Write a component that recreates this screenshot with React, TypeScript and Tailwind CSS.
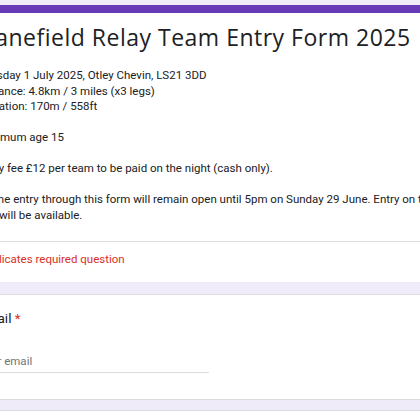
export default function App() {
  const lines = [
    "Tuesday 1 July 2025, Otley Chevin, LS21 3DD",
    "Distance: 4.8km / 3 miles (x3 legs)",
    "Elevation: 170m / 558ft",
  ];

  return (
    <div className="h-[420px] w-[420px] overflow-hidden bg-[#f0ebf8] pt-[5px] font-['Roboto',sans-serif] text-[#202124]">
      <div className="-ml-[40px] w-[560px]">
        <section className="rounded-lg border-t-[8px] border-[#673ab7] bg-white">
          <div className="pl-[18px] pr-4 pt-[8px]">
            <h1 className="font-['Open_Sans',sans-serif] text-[23px] leading-[32px] tracking-[0.5px]">
              Danefield Relay Team Entry Form 2025
            </h1>
            <div className="mt-[15px] text-[11.5px] leading-[15.5px]">
              {lines.map((line) => (
                <p key={line}>{line}</p>
              ))}
              <p className="mt-[15.5px]">Minimum age 15</p>
              <p className="mt-[15.5px]">
                Entry fee £12 per team to be paid on the night (cash only).
              </p>
              <p className="mt-[15.5px] w-[470px]">
                Online entry through this form will remain open until 5pm on
                Sunday 29 June. Entry on the day will be available.
              </p>
            </div>
          </div>
          <div className="mt-[18px] border-t border-[#dadce0]" />
          <p className="pb-[14px] pl-[18px] pt-[10px] text-[11.5px] leading-[15.5px] text-[#d93025]">
            * Indicates required question
          </p>
        </section>

        <section className="mt-[12px] rounded-lg border border-[#dadce0] bg-white">
          <div className="pl-[17px] pt-[13px] pb-[26px]">
            <p className="text-[13.5px] leading-[20px]">
              Email <span className="text-[#d93025]">*</span>
            </p>
            <div className="mt-[26px] w-[231px] border-b border-[#dadce0] pb-[3px] text-[11.5px] leading-[15.5px] text-[#70757a]">
              Your email
            </div>
          </div>
        </section>

        <section className="mt-[10px] h-[80px] rounded-lg border border-[#dadce0] bg-white" />
      </div>
    </div>
  );
}
